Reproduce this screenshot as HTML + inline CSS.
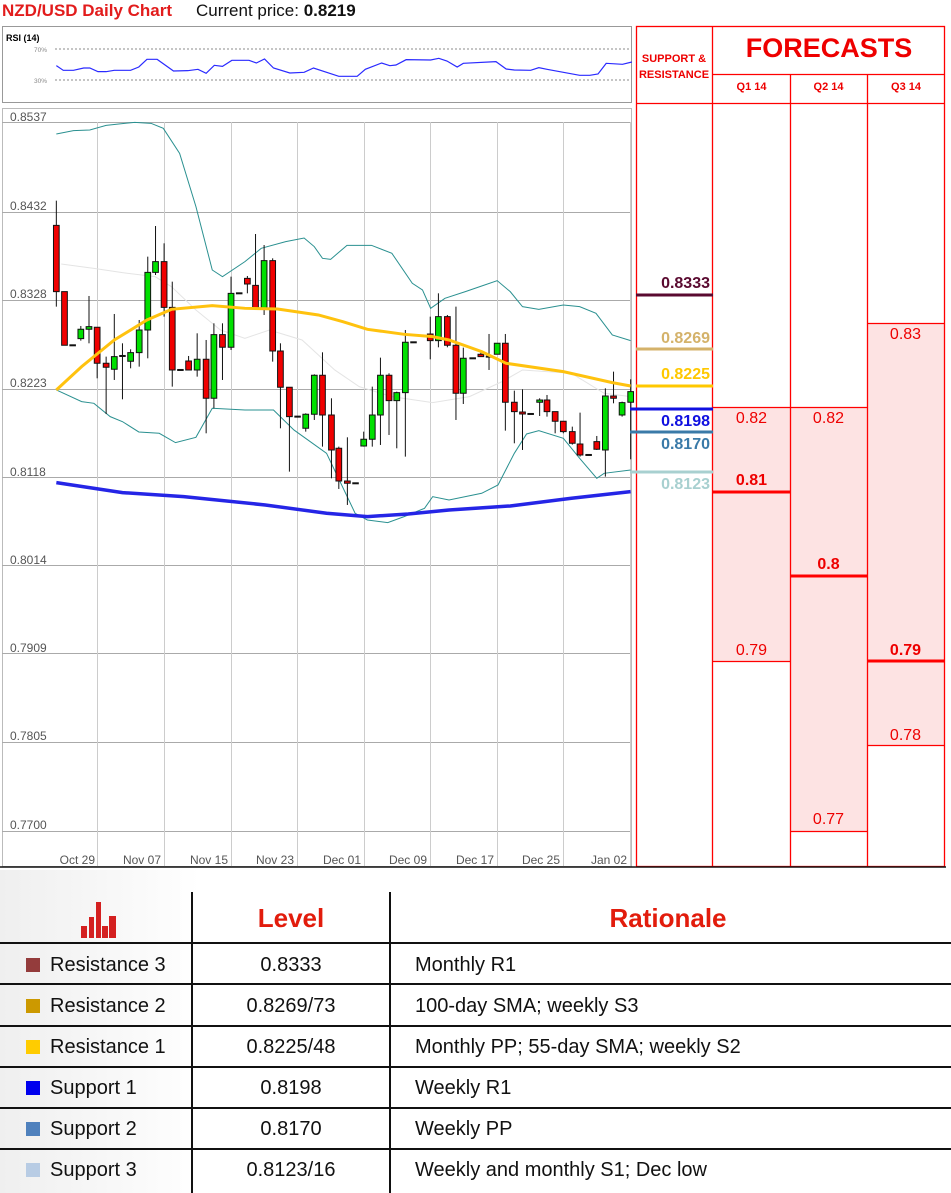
<!DOCTYPE html>
<html><head><meta charset="utf-8"><style>
body{margin:0;width:951px;height:1193px;background:#fff;position:relative;overflow:hidden;font-family:"Liberation Sans",sans-serif}
.a{position:absolute}
.t{position:absolute;font-size:20px;color:#111;white-space:nowrap}
.sq{position:absolute;width:14px;height:14px;left:26px}
.h{position:absolute;left:0;width:951px;height:2px;background:#111}
.fc{position:absolute;color:#e00;font-size:16px;text-align:center;width:77px}
.sr{position:absolute;left:636px;width:74px;text-align:right;font-size:16px;font-weight:bold}
</style></head><body>
<div class="a" style="left:2px;top:1px;font-size:17px;font-weight:bold;color:#e21c1c">NZD/USD Daily Chart</div>
<div class="a" style="left:196px;top:1px;font-size:17px;color:#111">Current price: <b>0.8219</b></div>

<svg class="a" style="left:0;top:0" width="951" height="870">
<rect x="2.5" y="26.5" width="629" height="76" fill="#fff" stroke="#999"/>
<text x="6" y="41" font-size="9" font-weight="bold" font-family="Liberation Sans">RSI (14)</text>
<text x="34" y="52" font-size="6.5" fill="#888" font-family="Liberation Sans">70%</text>
<text x="34" y="83" font-size="6.5" fill="#888" font-family="Liberation Sans">30%</text>
<line x1="55" y1="49" x2="630" y2="49" stroke="#666" stroke-dasharray="2,2" stroke-width="0.7"/>
<line x1="55" y1="80" x2="630" y2="80" stroke="#666" stroke-dasharray="2,2" stroke-width="0.7"/>
<g transform="scale(0.4082,0.3333)">
<polyline fill="none" stroke="#2a2aff" stroke-width="1.2" vector-effect="non-scaling-stroke" points="138,197 155,211 180,211 205,204 220,204 240,215 260,215 280,211 320,211 340,201 360,178 385,178 425,213 460,212 485,208 505,220 525,196 545,199 568,181 610,181 628,189 648,177 670,204 710,219 745,217 768,204 830,229 875,229 895,208 935,189 955,197 970,195 995,179 1055,180 1075,175 1095,183 1120,201 1135,190 1215,185 1240,207 1260,210 1300,211 1320,203 1340,208 1420,226 1445,226 1465,222 1485,190 1525,193 1548,186"/>
</g>
<rect x="2.5" y="108.5" width="629" height="758" fill="#fff" stroke="#bbb"/>
<g stroke="#aaa" stroke-width="1">
<line x1="2" y1="122.5" x2="631" y2="122.5"/><line x1="2" y1="212.5" x2="631" y2="212.5"/><line x1="2" y1="300.5" x2="631" y2="300.5"/><line x1="2" y1="389.5" x2="631" y2="389.5"/><line x1="2" y1="477.5" x2="631" y2="477.5"/><line x1="2" y1="565.5" x2="631" y2="565.5"/><line x1="2" y1="653.5" x2="631" y2="653.5"/><line x1="2" y1="742.5" x2="631" y2="742.5"/><line x1="2" y1="831.5" x2="631" y2="831.5"/>
</g>
<g stroke="#ccc" stroke-width="1">
<line x1="97.5" y1="122" x2="97.5" y2="867"/><line x1="164.5" y1="122" x2="164.5" y2="867"/><line x1="231.5" y1="122" x2="231.5" y2="867"/><line x1="297.5" y1="122" x2="297.5" y2="867"/><line x1="364.5" y1="122" x2="364.5" y2="867"/><line x1="430.5" y1="122" x2="430.5" y2="867"/><line x1="497.5" y1="122" x2="497.5" y2="867"/><line x1="563.5" y1="122" x2="563.5" y2="867"/><line x1="630.5" y1="122" x2="630.5" y2="867"/>
</g>
<g font-size="12" fill="#555" font-family="Liberation Sans">
<text x="10" y="121">0.8537</text><text x="10" y="210">0.8432</text><text x="10" y="298">0.8328</text><text x="10" y="387">0.8223</text><text x="10" y="476">0.8118</text><text x="10" y="564">0.8014</text><text x="10" y="652">0.7909</text><text x="10" y="740">0.7805</text><text x="10" y="829">0.7700</text>
</g>
<g font-size="12" fill="#555" font-family="Liberation Sans" text-anchor="end">
<text x="95" y="864">Oct 29</text><text x="161" y="864">Nov 07</text><text x="228" y="864">Nov 15</text><text x="294" y="864">Nov 23</text><text x="361" y="864">Dec 01</text><text x="427" y="864">Dec 09</text><text x="494" y="864">Dec 17</text><text x="560" y="864">Dec 25</text><text x="627" y="864">Jan 02</text>
</g>
<line x1="0" y1="867" x2="636" y2="867" stroke="#111" stroke-width="1.5"/>
<g transform="translate(0,110) scale(0.4082,0.3333)">
<polyline fill="none" stroke="#e4e4e4" stroke-width="1" vector-effect="non-scaling-stroke" points="150,462 230,475 300,488 380,500 420,530 480,600 540,660 600,685 660,660 740,690 820,780 880,830 960,860 1060,878 1150,860 1230,815 1280,780 1400,790 1480,850 1545,860"/>
<polyline fill="none" stroke="#2a9090" stroke-width="1" vector-effect="non-scaling-stroke" points="138,72 180,62 220,60 260,46 330,37 370,40 400,55 440,130 480,290 520,480 545,500 600,455 640,415 700,395 745,384 770,410 790,445 810,448 850,406 910,406 960,430 1010,520 1035,540 1055,595 1090,565 1140,545 1180,528 1218,512 1250,545 1280,590 1320,598 1380,585 1420,590 1460,610 1500,675 1545,692"/>
<polyline fill="none" stroke="#2a9090" stroke-width="1" vector-effect="non-scaling-stroke" points="138,840 200,875 230,880 270,920 300,935 340,966 390,970 430,998 480,982 520,895 600,900 670,900 720,960 800,1030 870,1210 900,1230 950,1238 990,1220 1040,1195 1060,1160 1100,1170 1180,1150 1220,1125 1260,1030 1290,972 1320,962 1380,985 1420,1045 1462,1105 1480,1090 1545,1080"/>
<g stroke="#111" stroke-width="1" vector-effect="non-scaling-stroke" id="c"></g>
<polyline fill="none" stroke="#ffc20e" stroke-width="3" vector-effect="non-scaling-stroke" points="138,840 200,770 280,690 360,630 420,598 520,587 600,595 680,597 780,615 840,635 900,658 990,673 1060,680 1100,690 1180,725 1240,760 1380,785 1500,818 1545,828"/>
<polyline fill="none" stroke="#2525e6" stroke-width="3.5" vector-effect="non-scaling-stroke" points="138,1118 300,1148 450,1160 650,1185 800,1210 900,1220 1000,1212 1100,1200 1250,1188 1400,1165 1545,1145"/>
</g>
</svg>
<script>
var d=[[138,'r',346,545,272,590],[158,'r',545,706,545,706],[178,'d',706,706,706,706],[198,'g',658,686,648,692],[218,'g',650,658,558,700],[238,'r',652,760,652,805],[260,'r',760,772,740,912],[280,'g',740,778,612,810],[300,'d',738,738,700,868],[320,'g',728,754,718,775],[341,'g',660,728,630,770],[362,'g',487,660,440,745],[381,'g',455,487,348,495],[402,'r',455,592,400,620],[422,'r',592,780,515,830],[442,'d',780,780,780,780],[462,'r',753,780,738,780],[483,'g',748,780,670,800],[505,'r',748,865,690,970],[524,'g',674,865,640,895],[545,'r',674,712,640,810],[566,'g',550,712,500,720],[586,'d',550,550,550,550],[606,'r',505,522,498,550],[626,'r',526,595,372,600],[647,'g',452,595,405,615],[668,'r',452,723,445,755],[687,'r',723,832,700,955],[709,'r',832,920,832,1085],[729,'d',920,920,920,920],[749,'g',913,955,910,965],[770,'g',796,913,793,930],[790,'r',796,915,727,1010],[812,'r',915,1020,865,1105],[830,'r',1015,1113,1010,1137],[851,'r',1113,1120,982,1185],[871,'d',1120,1120,1120,1120],[891,'g',988,1008,965,1010],[912,'g',915,988,830,1010],[932,'g',796,915,743,1005],[953,'r',796,872,790,975],[972,'g',848,872,845,1015],[993,'g',697,848,660,1040],[1013,'d',697,697,697,697],[1054,'r',672,692,620,748],[1074,'g',620,692,550,712],[1096,'r',620,706,615,712],[1117,'r',706,850,590,930],[1135,'g',745,850,713,882],[1158,'d',745,745,745,745],[1178,'r',733,740,728,740],[1198,'d',740,740,672,780],[1218,'g',700,733,700,733],[1238,'r',700,877,672,962],[1260,'r',877,905,842,1000],[1280,'r',906,912,838,1020],[1300,'d',912,912,912,912],[1322,'g',870,877,865,918],[1340,'r',870,905,855,920],[1360,'r',905,934,905,970],[1380,'r',934,965,934,970],[1402,'r',965,1000,950,1004],[1421,'r',1002,1035,908,1040],[1442,'d',1035,1035,1035,1035],[1462,'r',995,1018,978,1020],[1483,'g',858,1020,835,1100],[1503,'r',858,865,785,880],[1524,'g',878,915,875,920],[1545,'g',845,877,808,1048]];
var s='';d.forEach(function(c){var x=c[0];s+='<line x1="'+x+'" x2="'+x+'" y1="'+c[4]+'" y2="'+c[5]+'" vector-effect="non-scaling-stroke"/>';if(c[1]=='d'){s+='<line x1="'+(x-8)+'" x2="'+(x+8)+'" y1="'+c[2]+'" y2="'+c[2]+'" vector-effect="non-scaling-stroke" stroke-width="2"/>';}else{var h=Math.max(c[3]-c[2],6);s+='<rect x="'+(x-7)+'" y="'+c[2]+'" width="14" height="'+h+'" fill="'+(c[1]=='r'?'#f00000':'#00e000')+'" vector-effect="non-scaling-stroke"/>';}});
document.getElementById('c').innerHTML=s;
</script>

<div class="a" style="left:713px;top:407px;width:77px;height:254px;background:#fde3e3"></div>
<div class="a" style="left:790px;top:407px;width:77px;height:424px;background:#fde3e3"></div>
<div class="a" style="left:867px;top:323px;width:78px;height:422px;background:#fde3e3"></div>
<svg class="a" style="left:0;top:0" width="951" height="870">
<g stroke="#f00" stroke-width="1.3" fill="none">
<rect x="636.5" y="26.5" width="308" height="840"/>
<line x1="712.5" y1="26" x2="712.5" y2="867"/>
<line x1="790.5" y1="74" x2="790.5" y2="867"/>
<line x1="867.5" y1="74" x2="867.5" y2="867"/>
<line x1="712" y1="74.5" x2="945" y2="74.5"/>
<line x1="636" y1="103.5" x2="945" y2="103.5"/>
<line x1="713" y1="407.5" x2="867" y2="407.5"/>
<line x1="713" y1="661.5" x2="790" y2="661.5"/>
<line x1="790" y1="831.5" x2="867" y2="831.5"/>
<line x1="867" y1="323.5" x2="945" y2="323.5"/>
<line x1="867" y1="745.5" x2="945" y2="745.5"/>
</g>
<g stroke="#f00" stroke-width="3">
<line x1="713" y1="492" x2="790" y2="492"/><line x1="790" y1="576" x2="867" y2="576"/><line x1="867" y1="661" x2="945" y2="661"/>
</g>
<line x1="636" y1="295" x2="713" y2="295" stroke="#5a0a30" stroke-width="3"/>
<line x1="636" y1="349" x2="713" y2="349" stroke="#d4b26a" stroke-width="3"/>
<line x1="636" y1="386" x2="713" y2="386" stroke="#ffc800" stroke-width="3"/>
<line x1="630" y1="409" x2="713" y2="409" stroke="#1010e0" stroke-width="3"/>
<line x1="630" y1="432" x2="713" y2="432" stroke="#3a7aa8" stroke-width="3"/>
<line x1="630" y1="472" x2="713" y2="472" stroke="#a8d0d0" stroke-width="3"/>
<line x1="636" y1="867" x2="946" y2="867" stroke="#111" stroke-width="1.5"/>
</svg>
<div class="a" style="left:636px;top:51px;width:76px;text-align:center;color:#e00;font-size:11px;font-weight:bold;line-height:16px">SUPPORT &amp;<br>RESISTANCE</div>
<div class="a" style="left:713px;top:33px;width:232px;text-align:center;color:#e00;font-size:27px;font-weight:bold">FORECASTS</div>
<div class="a" style="left:713px;top:81px;width:77px;text-align:center;color:#e00;font-size:11px;font-weight:bold">Q1 14</div>
<div class="a" style="left:790px;top:81px;width:77px;text-align:center;color:#e00;font-size:11px;font-weight:bold">Q2 14</div>
<div class="a" style="left:867px;top:81px;width:78px;text-align:center;color:#e00;font-size:11px;font-weight:bold">Q3 14</div>
<div class="sr" style="top:275px;color:#5a0a30">0.8333</div>
<div class="sr" style="top:330px;color:#d4b26a">0.8269</div>
<div class="sr" style="top:366px;color:#ffc800">0.8225</div>
<div class="sr" style="top:413px;color:#1010e0">0.8198</div>
<div class="sr" style="top:436px;color:#3a7aa8">0.8170</div>
<div class="sr" style="top:476px;color:#a8d0d0">0.8123</div>
<div class="fc" style="left:713px;top:410px">0.82</div>
<div class="fc" style="left:790px;top:410px">0.82</div>
<div class="fc" style="left:867px;top:326px">0.83</div>
<div class="fc" style="left:713px;top:472px;font-weight:bold">0.81</div>
<div class="fc" style="left:790px;top:556px;font-weight:bold">0.8</div>
<div class="fc" style="left:867px;top:642px;font-weight:bold">0.79</div>
<div class="fc" style="left:713px;top:642px">0.79</div>
<div class="fc" style="left:867px;top:727px">0.78</div>
<div class="fc" style="left:790px;top:811px">0.77</div>

<div class="a" style="left:0;top:870px;width:200px;height:323px;background:linear-gradient(90deg,#efefef,#fafafa 70%,#fff)"></div>
<div class="a" style="left:191px;top:892px;width:1.5px;height:301px;background:#111"></div>
<div class="a" style="left:389px;top:892px;width:1.5px;height:301px;background:#111"></div>
<div class="h" style="top:942px"></div><div class="h" style="top:983px"></div><div class="h" style="top:1025px"></div><div class="h" style="top:1066px"></div><div class="h" style="top:1107px"></div><div class="h" style="top:1148px"></div>
<div class="a" style="left:81px;top:926px;width:6px;height:12px;background:#d42020"></div>
<div class="a" style="left:89px;top:917px;width:5px;height:21px;background:#d42020"></div>
<div class="a" style="left:96px;top:902px;width:5px;height:36px;background:#d42020"></div>
<div class="a" style="left:102px;top:926px;width:6px;height:12px;background:#d42020"></div>
<div class="a" style="left:109px;top:916px;width:7px;height:22px;background:#d42020"></div>
<div class="a" style="left:192px;top:903px;width:198px;text-align:center;color:#e21c0c;font-size:26px;font-weight:bold">Level</div>
<div class="a" style="left:390px;top:903px;width:556px;text-align:center;color:#e21c0c;font-size:26px;font-weight:bold">Rationale</div>
<div class="sq" style="top:958px;background:#943c3c"></div><div class="t" style="left:50px;top:954px">Resistance 3</div><div class="t" style="left:192px;width:198px;text-align:center;top:954px">0.8333</div><div class="t" style="left:415px;top:954px">Monthly R1</div>
<div class="sq" style="top:999px;background:#cc9900"></div><div class="t" style="left:50px;top:995px">Resistance 2</div><div class="t" style="left:192px;width:198px;text-align:center;top:995px">0.8269/73</div><div class="t" style="left:415px;top:995px">100-day SMA; weekly S3</div>
<div class="sq" style="top:1040px;background:#ffcc00"></div><div class="t" style="left:50px;top:1036px">Resistance 1</div><div class="t" style="left:192px;width:198px;text-align:center;top:1036px">0.8225/48</div><div class="t" style="left:415px;top:1036px">Monthly PP; 55-day SMA; weekly S2</div>
<div class="sq" style="top:1081px;background:#0000ee"></div><div class="t" style="left:50px;top:1077px">Support 1</div><div class="t" style="left:192px;width:198px;text-align:center;top:1077px">0.8198</div><div class="t" style="left:415px;top:1077px">Weekly R1</div>
<div class="sq" style="top:1122px;background:#4f81bd"></div><div class="t" style="left:50px;top:1118px">Support 2</div><div class="t" style="left:192px;width:198px;text-align:center;top:1118px">0.8170</div><div class="t" style="left:415px;top:1118px">Weekly PP</div>
<div class="sq" style="top:1163px;background:#b8cce4"></div><div class="t" style="left:50px;top:1159px">Support 3</div><div class="t" style="left:192px;width:198px;text-align:center;top:1159px">0.8123/16</div><div class="t" style="left:415px;top:1159px">Weekly and monthly S1; Dec low</div>
</body></html>
